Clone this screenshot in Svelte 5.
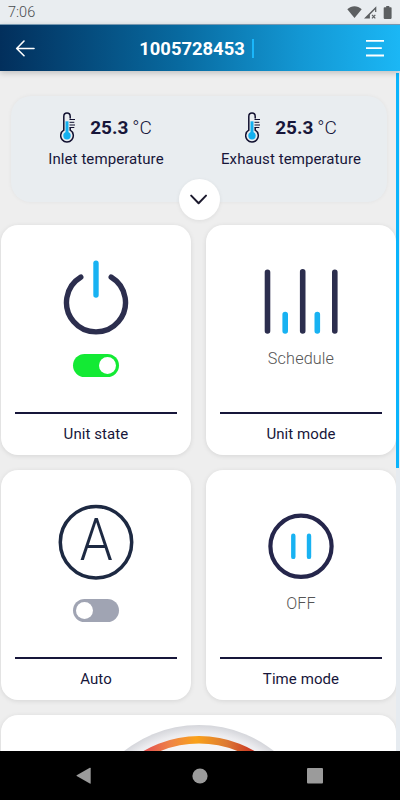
<script>
  const readings = [
    { label: 'Inlet temperature', value: '25.3' },
    { label: 'Exhaust temperature', value: '25.3' }
  ];
  const cards = [
    { id: 'power', label: 'Unit state', on: true },
    { id: 'bars', label: 'Unit mode', status: 'Schedule' },
    { id: 'auto', label: 'Auto', on: false },
    { id: 'pause', label: 'Time mode', status: 'OFF' }
  ];
</script>

<div class="screen">
  <div class="status">
    <span>7:06</span>
    <svg width="46" height="14" viewBox="-.5 0 46 14">
      <path d="M.8 3.2C5-.9 11-.9 15.2 3.2L8 12z" fill="#5c5f61" />
      <path d="M17.5 12.5 29.8.3V6h-1.2V3.5l-5.2 5.2v3.8z" fill="#5c5f61" />
      <path d="m25.5 8.8 3.3 3.5m0-3.5-3.3 3.5" stroke="#5c5f61" stroke-width="1.2" />
      <path d="M38 1.3h1.7V.1h3.1v1.2h1.5q.8 0 .8.8v10q0 .8-.8.8H38q-.8 0-.8-.8v-10q0-.8.8-.8z" fill="#5c5f61" />
    </svg>
  </div>

  <header>
    <svg class="back" width="20" height="18" viewBox="0 0 20 18" fill="none" stroke="#fff" stroke-width="1.6" stroke-linecap="round" stroke-linejoin="round">
      <path d="M19 8.5H1.9M9 1 1.7 8.5 9 15.7" />
    </svg>
    <div class="title"><b>1005728453</b><i></i></div>
    <svg class="menu" width="18" height="17" viewBox="0 0 18 17" stroke="#fff" stroke-width="1.8">
      <path d="M0 .9h18M0 8.2h15.8M0 15.5h18" />
    </svg>
  </header>

  <main>
    <section class="temps">
      {#each readings as r}
        <div class="reading">
          <div class="value">
            <svg width="16" height="31" viewBox="0 0 16 31" fill="none">
              <path d="M10.2 6V4.4Q10.2 1 7 1T3.8 4.4V18.2A6.3 6.3 0 1 0 10.2 18.2V16" stroke="#11102f" stroke-width="1.5" stroke-linecap="round" />
              <path d="M7 9.3V24" stroke="#12b0ef" stroke-width="3" />
              <circle cx="7" cy="23.8" r="3.7" fill="#12b0ef" />
              <path d="M9.5 7.5H15M9.5 10.3H14.3M9.5 13H15M9.5 15.5H14.3" stroke="#11102f" stroke-width="1" />
            </svg>
            <b>{r.value}</b><span>°C</span>
          </div>
          <p>{r.label}</p>
        </div>
      {/each}
      <button aria-label="Expand">
        <svg width="18" height="11" viewBox="0 0 18 11" fill="none" stroke="#1c1a2e" stroke-width="2" stroke-linecap="round" stroke-linejoin="round">
          <path d="m1.2 1.6 7.4 7.6L16 1.6" />
        </svg>
      </button>
    </section>

    <div class="grid">
      {#each cards as c}
        <article>
          <div class="icon">
            {#if c.id === 'power'}
              <svg width="66" height="76" viewBox="0 0 66 76" fill="none" stroke-width="5.4" stroke-linecap="round">
                <path d="M17.8 18.1A29.5 29.5 0 1 0 48.2 18.1" stroke="#2c2e4e" />
                <path d="M33 4.2V36" stroke="#18b2f2" />
              </svg>
            {:else if c.id === 'bars'}
              <svg width="74" height="76" viewBox="0 0 74 76" stroke-width="5.6" stroke-linecap="round">
                <path d="M3.5 13.2V72M38.7 12.7V72M70.8 13.2V72" stroke="#2c2e4e" />
                <path d="M21.2 55.5V72M53.3 55.5V72" stroke="#18b2f2" />
              </svg>
            {:else if c.id === 'auto'}
              <svg width="76" height="76" viewBox="0 0 76 76">
                <circle cx="38" cy="38.3" r="35.7" fill="none" stroke="#1d2942" stroke-width="3.5" />
                <text x="38.2" y="55.7" text-anchor="middle" textLength="33" lengthAdjust="spacingAndGlyphs" font-size="60" font-weight="300" fill="#1d2942">A</text>
              </svg>
            {:else}
              <svg width="66" height="76" viewBox="0 0 66 76" fill="none">
                <circle cx="33" cy="42.3" r="30.6" stroke="#25264b" stroke-width="4.2" />
                <path d="M25.3 31.7V52.9M41 31.7V52.9" stroke="#18b2f2" stroke-width="4.4" stroke-linecap="round" />
              </svg>
            {/if}
          </div>
          {#if c.status}
            <div class="state">{c.status}</div>
          {:else}
            <div class="toggle" class:on={c.on}><i></i></div>
          {/if}
          <div class="label">{c.label}</div>
        </article>
      {/each}
    </div>

    <article class="dial">
      <svg width="244" height="37" viewBox="0 0 244 37">
        <defs>
          <linearGradient id="heat" gradientUnits="userSpaceOnUse" x1="65" x2="178" y1="0" y2="0">
            <stop offset="0" stop-color="#e34b50" />
            <stop offset=".25" stop-color="#ee8347" />
            <stop offset=".48" stop-color="#faa21a" />
            <stop offset=".75" stop-color="#dc7934" />
            <stop offset="1" stop-color="#c92f20" />
          </linearGradient>
          <radialGradient id="rim" gradientUnits="userSpaceOnUse" cx="122" cy="131" r="121">
            <stop offset=".87" stop-color="#f5f5f7" />
            <stop offset=".93" stop-color="#ececef" />
            <stop offset="1" stop-color="#d5d6db" />
          </radialGradient>
        </defs>
        <circle cx="122" cy="131" r="121" fill="url(#rim)" />
        <circle cx="122" cy="131" r="106.2" fill="#f5f4f6" stroke="url(#heat)" stroke-width="7.6" />
      </svg>
    </article>
    <div class="scroll"><i></i></div>
  </main>

  <nav>
    <svg width="16" height="18" viewBox="0 0 16 18"><path d="M.7 8.3 13.8.8q.9-.4.9.5v14.8q0 .9-.9.4L.7 9.1q-.5-.4 0-.8z" fill="#9b9b9b" /></svg>
    <svg width="16" height="16" viewBox="0 0 16 16"><circle cx="8" cy="8" r="7.6" fill="#9b9b9b" /></svg>
    <svg width="16" height="16" viewBox="0 0 16 16"><rect width="16" height="15.5" rx="1" fill="#9b9b9b" /></svg>
  </nav>
</div>

<style>
  .screen {
    width: 400px;
    height: 800px;
    display: flex;
    flex-direction: column;
    overflow: hidden;
    background: #eee;
    color: #17163a;
    font: 15px Roboto, sans-serif;
  }
  .screen * { box-sizing: border-box; }
  svg { display: block; flex: none; }
  .status {
    height: 24px;
    flex: none;
    display: flex;
    align-items: center;
    justify-content: space-between;
    padding: 1px 8px 0 8px;
    background: #e9edf0;
    color: #484b4e;
    font-size: 14.5px;
    font-weight: 300;
  }
  header {
    height: 47px;
    flex: none;
    display: flex;
    align-items: center;
    justify-content: space-between;
    padding: 1px 16px 0 15px;
    border-top: 1px solid #7798b0;
    background: linear-gradient(90deg, #022f5c, #086aa0 45%, #1397d3 75%, #1bb7f5);
    box-shadow: 0 2px 6px #0003;
    position: relative;
    z-index: 2;
  }
  .title {
    display: flex;
    align-items: center;
    gap: 7px;
    padding-right: 8px;
    color: #fff;
    font-size: 18.4px;
  }
  .title b { font-weight: 700; }
  .title i { width: 2px; height: 19px; background: #1ab6fa; }
  main {
    flex: 1;
    min-height: 0;
    position: relative;
    overflow: hidden;
    padding: 25px 4px 0 1px;
  }
  .temps {
    position: relative;
    height: 106px;
    width: 376px;
    margin: 0 0 23px 10px;
    display: flex;
    border-radius: 20px;
    background: #e9edf0;
    box-shadow: 0 0 4px #0000000d;
  }
  .reading {
    width: 185px;
    padding: 15px 0 0 5px;
    display: flex;
    flex-direction: column;
    align-items: center;
  }
  .value {
    display: flex;
    align-items: center;
    height: 33px;
    font-size: 19px;
  }
  .value b, .value span { padding-bottom: 1px; }
  .value b { margin: 0 4px 0 14px; }
  .value span { font-weight: 300; }
  .reading p { margin: 5px 0 0; line-height: 20px; letter-spacing: .08px; white-space: nowrap; }
  button {
    position: absolute;
    left: 167.5px;
    top: 83px;
    width: 41px;
    height: 41px;
    padding: 0;
    display: grid;
    place-items: center;
    border: 0;
    border-radius: 50%;
    background: #fff;
    box-shadow: 0 1px 4px #00000012;
  }
  .grid {
    display: grid;
    grid-template-columns: 190px 190px;
    gap: 15px;
  }
  article {
    height: 230px;
    padding: 34px 14px 0;
    display: flex;
    flex-direction: column;
    align-items: center;
    border-radius: 17px;
    background: #fff;
    box-shadow: 0 1px 5px #0000001a;
  }
  .icon { height: 76px; }
  .toggle {
    width: 46px;
    height: 23px;
    margin-top: 19px;
    padding: 3px;
    display: flex;
    border-radius: 12px;
    background: #a0a4b3;
  }
  .toggle i { width: 17px; height: 17px; border-radius: 50%; background: #fff; }
  .toggle.on { justify-content: flex-end; background: #13ea34; }
  .state {
    margin-top: 13px;
    line-height: 22px;
    font-size: 16.2px;
    font-weight: 300;
    letter-spacing: .15px;
    color: #555;
  }
  .label {
    width: 162px;
    margin-top: auto;
    height: 43px;
    padding-top: 9.5px;
    border-top: 2px solid #17163a;
    line-height: 20px;
    letter-spacing: .08px;
    text-align: center;
  }
  .dial { margin-top: 15px; padding: 0; width: 395px; }
  .scroll {
    position: absolute;
    right: 0;
    top: 0;
    bottom: 0;
    width: 4px;
    padding: 2px 1px 0 .4px;
    background: #e6ebf0;
  }
  .scroll i { display: block; height: 395px; background: #0ab4fc; }
  nav {
    height: 49px;
    flex: none;
    display: flex;
    align-items: center;
    justify-content: space-between;
    padding: 0 77px 0 76px;
    background: #000;
  }
</style>
